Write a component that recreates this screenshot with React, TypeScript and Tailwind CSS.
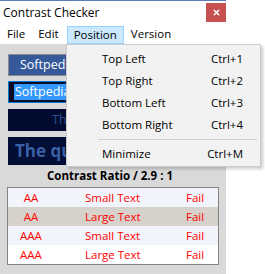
import { X } from "lucide-react";

const menuItems = [
  { label: "Top Left", key: "Ctrl+1" },
  { label: "Top Right", key: "Ctrl+2" },
  { label: "Bottom Left", key: "Ctrl+3" },
  { label: "Bottom Right", key: "Ctrl+4" },
];

const rows = [
  { level: "AA", size: "Small Text", bg: "bg-[#f1f5fb]" },
  { level: "AA", size: "Large Text", bg: "bg-[#d6d2cb]" },
  { level: "AAA", size: "Small Text", bg: "bg-[#f1f5fb]" },
  { level: "AAA", size: "Large Text", bg: "bg-white" },
];

export default function App() {
  return (
    <div
      className="relative w-[265px] h-[274px] bg-white overflow-hidden text-black"
      style={{ fontFamily: '"Segoe UI", "Open Sans", sans-serif' }}
    >
      <div className="w-[226px] h-full flex flex-col">
        {/* title bar */}
        <div className="h-6 border-t border-[#5a7cbd] flex items-start justify-between bg-white">
          <span className="pl-[3px] pt-[4px] text-[12px] leading-4">Contrast Checker</span>
          <div className="mt-[2px] w-5 h-[19px] bg-[#c75050] flex items-center justify-center">
            <X className="w-[9px] h-[9px] text-white" strokeWidth={4} />
          </div>
        </div>

        {/* menu bar */}
        <div className="h-5 flex items-end text-[11.5px] leading-4 bg-white">
          <span className="pl-[7px] pr-[10px] pb-[2px]">File</span>
          <span className="pl-[3px] pr-[8px] pb-[2px]">Edit</span>
          <span className="h-[18px] px-[6px] bg-[#cce8ff] border border-[#99d1ff] flex items-center">Position</span>
          <span className="pl-[7px] pb-[2px]">Version</span>
        </div>

        {/* body */}
        <div className="flex-1 bg-[#d9d9d9] px-[8px] pt-[10px] flex flex-col">
          <div className="h-[22px] w-[210px] border border-[#8a8a8a] bg-[#36599a] flex items-center pl-[11px] text-white text-[12.5px]">
            Softpedia
          </div>
          <div className="mt-[5px] h-[22px] w-[210px] border border-[#0078d7] bg-[#0c0c27] flex items-center pl-[5px]">
            <span className="bg-[#3399ff] text-white text-[12.5px] leading-4 px-[1px] pr-8">Softpedia</span>
          </div>
          <div className="mt-[6px] h-[22px] w-[210px] bg-[#010c30] flex items-center pl-[44px] text-[#2d4f90] text-[12.5px]">
            The quick brown fox
          </div>
          <div className="mt-[6px] h-[28px] w-[210px] bg-[#020e35] flex items-center pl-[7px] text-[#3a60a6] text-[17px] font-bold">
            The quick brown
          </div>
          <div className="h-[22px] flex items-center justify-center text-[11.5px] font-bold pr-[6px]">
            Contrast Ratio / 2.9 : 1
          </div>
          <div className="ml-[-1px] w-[212px] border border-[#858585] flex flex-col text-[11.5px] text-[#ff0000]">
            {rows.map((r, i) => (
              <div key={i} className={`h-[19px] flex items-center ${r.bg}`}>
                <span className="w-[46px] text-center">{r.level}</span>
                <span className="w-[132px] pl-[31px]">{r.size}</span>
                <span>Fail</span>
              </div>
            ))}
          </div>
        </div>
      </div>

      {/* Position dropdown */}
      <div className="absolute left-[66px] top-[44px] w-[195px] h-[123px] bg-[#f2f2f2] border border-[#cccccc] shadow-[2px_2px_3px_rgba(0,0,0,0.2)] pt-[3px] text-[11.5px]">
        {menuItems.map((m) => (
          <div key={m.label} className="h-[22px] flex items-center justify-between pl-[35px] pr-[17px]">
            <span>{m.label}</span>
            <span>{m.key}</span>
          </div>
        ))}
        <div className="my-[3px] ml-[31px] mr-[3px] h-px bg-[#cfcfcf]" />
        <div className="h-[22px] flex items-center justify-between pl-[35px] pr-[17px]">
          <span>Minimize</span>
          <span>Ctrl+M</span>
        </div>
      </div>
    </div>
  );
}
